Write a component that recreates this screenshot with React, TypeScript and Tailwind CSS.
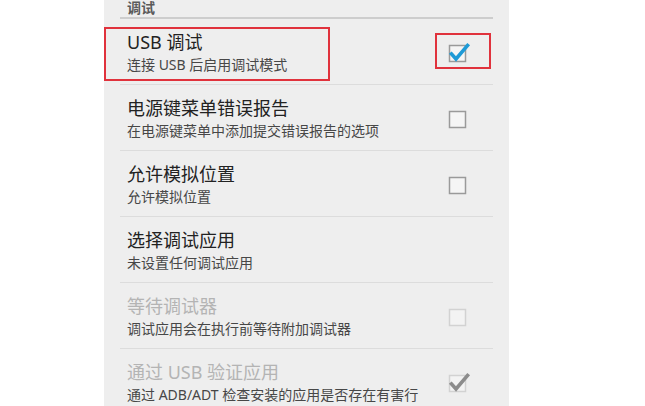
import React from "react";

type Pref = {
  title: string;
  summary: string;
  check?: "on" | "off" | "none";
  disabled?: boolean;
};

const prefs: Pref[] = [
  { title: "USB 调试", summary: "连接 USB 后启用调试模式", check: "on" },
  { title: "电源键菜单错误报告", summary: "在电源键菜单中添加提交错误报告的选项", check: "off" },
  { title: "允许模拟位置", summary: "允许模拟位置", check: "off" },
  { title: "选择调试应用", summary: "未设置任何调试应用", check: "none" },
  { title: "等待调试器", summary: "调试应用会在执行前等待附加调试器", check: "off", disabled: true },
  { title: "通过 USB 验证应用", summary: "通过 ADB/ADT 检查安装的应用是否存在有害行为", check: "on", disabled: true },
];

const CheckBox = ({ checked, disabled }: { checked: boolean; disabled?: boolean }) => (
  <svg width="26" height="26" viewBox="0 0 26 26">
    <rect
      x="2.5"
      y="6.5"
      width="16"
      height="16"
      fill={disabled ? "#f3f3f3" : "#f5f5f5"}
      stroke={disabled ? "#d2d2d2" : "#9a9a9a"}
      strokeWidth="1.5"
    />
    {checked && (
      <path
        d="M4.5 15 L9 20 L20.5 6.5"
        fill="none"
        stroke={disabled ? "#8c8c8c" : "#1e9ad6"}
        strokeWidth="3.6"
        strokeLinecap="square"
      />
    )}
  </svg>
);

export default function App() {
  return (
    <div className="w-[645px] h-[406px] bg-white overflow-hidden font-['Noto_Sans','Noto_Sans_CJK_SC',sans-serif]">
      <div className="relative ml-[104px] w-[405px] h-full bg-[#eeeeee]">
        {/* section header */}
        <div className="px-[16px]">
          <div className="h-[17px] pl-[7px] text-[14px] leading-[16px] font-bold text-[#5a5a5a]">调试</div>
          <div className="h-[2px] bg-[#cdcdcd]" />
        </div>

        {prefs.map((p, i) => (
          <div key={p.title}>
            {i > 0 && <div className="mx-[16px] h-px bg-[#dcdcdc]" />}
            <div className="h-[65px] flex pl-[23px] pr-[36px]">
              <div className="flex-1 pt-[11px]">
                <div
                  className={`text-[18px] leading-[24px] ${
                    p.disabled ? "text-[#b4b4b4]" : "text-[#222222]"
                  }`}
                >
                  {p.title}
                </div>
                <div className="mt-[2px] max-w-[305px] text-[14px] leading-[18px] text-[#474747]">
                  {p.summary}
                </div>
              </div>
              <div className="w-[26px] flex items-center">
                {p.check !== "none" && (
                  <CheckBox checked={p.check === "on"} disabled={p.disabled} />
                )}
              </div>
            </div>
          </div>
        ))}

        {/* annotation boxes */}
        <div className="absolute left-0 top-[27px] w-[226px] h-[54px] border-2 border-[#e0323c]" />
        <div className="absolute left-[331px] top-[33px] w-[56px] h-[36px] border-2 border-[#e0323c]" />
      </div>
    </div>
  );
}
